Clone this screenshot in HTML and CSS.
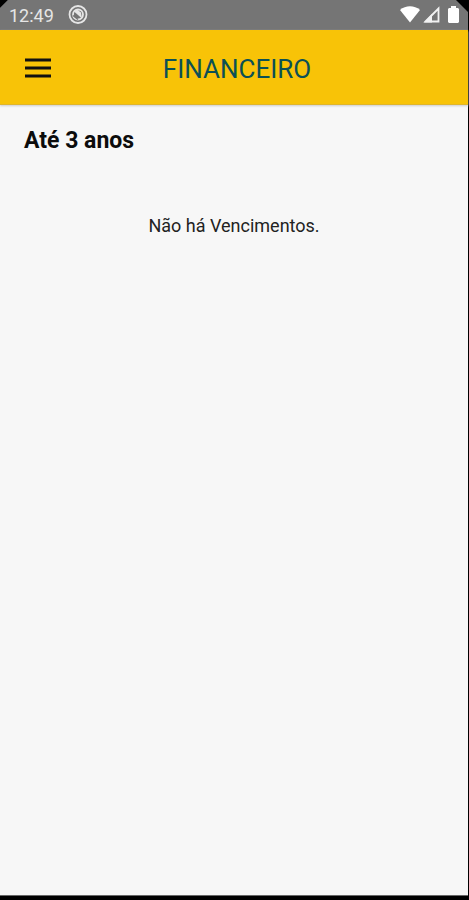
FILE: index.html
```html
<!DOCTYPE html>
<html lang="pt-BR">
<head>
  <meta charset="UTF-8">
  <meta name="viewport" content="width=device-width, initial-scale=1.0">
  <title>Financeiro</title>
  <link rel="stylesheet" href="styles.css">
</head>
<body>
  <div class="screen">
    <div class="status-bar">
      <span class="time">12:49</span>
      <svg class="status-app" width="20" height="20" viewBox="0 0 20 20">
        <circle cx="10" cy="9.500" r="8.500" fill="none" stroke="#e6e6e6" stroke-width="1.800"/>
        <circle cx="10" cy="9.500" r="5" fill="none" stroke="#e6e6e6" stroke-width="1.800"/>
        <path d="M6 6.500l8 7-1-6-4-3z" fill="#e6e6e6"/>
        <path d="M5 10.500l5 4" stroke="#757575" stroke-width="1.500"/>
      </svg>
      <div class="status-icons">
        <svg width="20" height="18" viewBox="0 0 20 18">
          <path d="M0 4C5.500-1 14.500-1 20 4L10 16.500z" fill="#fff"/>
        </svg>
        <svg width="17" height="18" viewBox="0 0 17 18">
          <path d="M2.500 15.500L15.500 2.500v13z" fill="none" stroke="#f2f2f2" stroke-width="1.800"/>
          <path d="M1 16.500L9 8v8.500z" fill="#f2f2f2"/>
        </svg>
        <svg class="battery" width="11" height="18" viewBox="0 0 11 18">
          <path d="M3 0h5v2h2l1 1v13l-1 1H1l-1-1V3l1-1h2z" fill="#fff"/>
        </svg>
      </div>
    </div>

    <header class="header">
      <button class="menu-button" type="button" aria-label="Menu">
        <svg width="26" height="24" viewBox="0 0 26 24">
          <path d="M0 5h26M0 13h26M0 21h26" stroke="#111" stroke-width="3"/>
        </svg>
      </button>
      <h1 class="title">FINANCEIRO</h1>
    </header>

    <main class="content">
      <h2 class="period">Até 3 anos</h2>
      <p class="empty">Não há Vencimentos.</p>
    </main>
  </div>
</body>
</html>
```
FILE: styles.css
```css
* {
  box-sizing: border-box;
}

body {
  margin: 0;
  background-color: #000;
  font-family: Roboto, "Liberation Sans", sans-serif;
}

.screen {
  display: flex;
  flex-direction: column;
  min-height: calc(100vh - 4px);
  margin-right: 1px;
  border-bottom: 1px solid #666;
  background-color: #f7f7f7;
}

.status-bar {
  display: flex;
  align-items: center;
  height: 30px;
  padding: 0 9px;
  color: #e6e6e6;
  background: linear-gradient(135deg, #000 5px, transparent 6px),
    linear-gradient(225deg, #000 8px, transparent 9px), #757575;
}

.time {
  font-size: 18px;
}

.status-app {
  margin-left: 14px;
}

.status-icons {
  display: flex;
  align-items: center;
  gap: 3px;
  margin-left: auto;
}

.battery {
  margin-left: 5px;
}

.header {
  display: grid;
  grid-template-columns: 52px 1fr 52px;
  align-items: center;
  height: 75px;
  background-color: #f8c307;
  border-bottom: 1px solid #dfb52c;
  box-shadow: 0 1px 2px #ccc;
}

.menu-button {
  display: flex;
  justify-content: flex-end;
  padding: 0 1px 0 0;
  border: none;
  background: none;
  cursor: pointer;
}

.title {
  margin: 4px 0 0 6px;
  color: #0c5055;
  font-size: 26px;
  font-weight: 400;
  text-align: center;
}

.content {
  flex: 1;
  padding: 20px 24px;
}

.period {
  margin: 0;
  color: #0c0c0c;
  font-size: 23px;
  font-weight: 700;
  line-height: 32px;
}

.empty {
  margin: 56px 0 0;
  color: #222;
  font-size: 18px;
  line-height: 26px;
  text-align: center;
}
```
